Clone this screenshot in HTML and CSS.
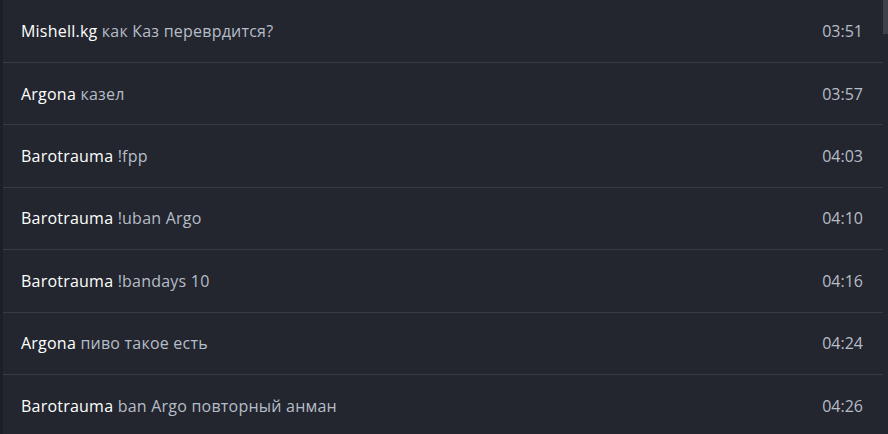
FILE: index.html
```html
<!DOCTYPE html>
<html lang="ru">
<head>
<meta charset="utf-8">
<link rel="stylesheet" href="styles.css">
</head>
<body>
<div class="app">
  <div class="edge"></div>
  <div class="list">
    <div class="row"><div class="msg"><span class="name">Mishell.kg</span> <span class="text">как Каз перевpдится?</span></div><div class="time">03:51</div></div>
    <div class="row"><div class="msg"><span class="name">Argona</span> <span class="text">казел</span></div><div class="time">03:57</div></div>
    <div class="row"><div class="msg"><span class="name">Barotrauma</span> <span class="text">!fpp</span></div><div class="time">04:03</div></div>
    <div class="row"><div class="msg"><span class="name">Barotrauma</span> <span class="text">!uban Argo</span></div><div class="time">04:10</div></div>
    <div class="row"><div class="msg"><span class="name">Barotrauma</span> <span class="text">!bandays 10</span></div><div class="time">04:16</div></div>
    <div class="row"><div class="msg"><span class="name">Argona</span> <span class="text">пиво такое есть</span></div><div class="time">04:24</div></div>
    <div class="row"><div class="msg"><span class="name">Barotrauma</span> <span class="text">ban Argo повторный анман</span></div><div class="time">04:26</div></div>
  </div>
  <div class="scrollbar"><div class="thumb"></div></div>
</div>
</body>
</html>
```
FILE: styles.css
```css
html, body {
  margin: 0;
  padding: 0;
  background: #23262e;
  overflow: hidden;
}
.app {
  display: flex;
  width: 888px;
  height: 434px;
  font-family: "Open Sans", "Noto Sans", sans-serif;
  font-size: 16px;
}
.edge {
  width: 3px;
  background: #1d1f25;
  flex: none;
}
.list {
  flex: 1;
  display: flex;
  flex-direction: column;
  padding-top: 0.6px;
}
.row {
  flex: none;
  height: 61.4px;
  border-bottom: 1px solid #383b43;
  display: flex;
  align-items: center;
  justify-content: space-between;
  padding: 0 20px 0 18px;
}
.msg {
  letter-spacing: 0.22px;
}
.name {
  color: #ffffff;
}
.text {
  color: #b6bdc8;
}
.time {
  color: #b6bdc8;
}
.scrollbar {
  width: 5px;
  flex: none;
  display: flex;
  flex-direction: column;
}
.thumb {
  height: 34px;
  background: #3e4149;
}
```
